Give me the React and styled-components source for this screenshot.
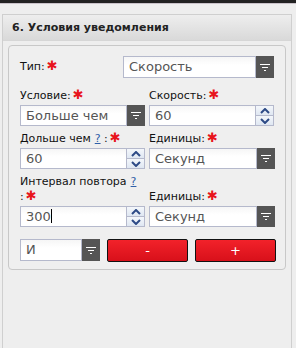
import styled, { createGlobalStyle } from "styled-components";

const GlobalStyle = createGlobalStyle`
  html, body {
    margin: 0;
    padding: 0;
    background: #eeeeee;
    font-family: "DejaVu Sans", Verdana, sans-serif;
  }
  #root {
    height: 348px;
    overflow: hidden;
  }
`;

const TopBar = styled.div`
  height: 3px;
  background: #222;
  border-bottom: 1px solid #c9c2c9;
`;

const Panel = styled.div`
  margin: 10px 4px 0 2px;
  height: 340px;
  border: 1px solid #cfcfcf;
  border-bottom: none;
  background: #eeeeee;
`;

const Header = styled.div`
  height: 25px;
  line-height: 25px;
  padding-left: 9px;
  font-size: 11px;
  font-weight: bold;
  color: #222;
  background: linear-gradient(#eeeeee, #d9d9d9);
  border-bottom: 1px solid #d6d6d6;
`;

const Box = styled.div`
  margin: 4px 5px 0 5px;
  padding: 10px 11px 7px 11px;
  border: 1px solid #c8c8c8;
  border-radius: 4px;
  background: #efefef;
  display: flex;
  flex-direction: column;
`;

const TypeRow = styled.div`
  display: flex;
  align-items: center;
  justify-content: space-between;
  height: 22px;
`;

const Grid = styled.div`
  display: grid;
  grid-template-columns: 125px 126px;
  column-gap: 4px;
  margin-top: ${(p) => p.$top}px;
`;

const Field = styled.div`
  display: flex;
  flex-direction: column;
  justify-content: flex-end;
`;

const Label = styled.div`
  font-size: 11px;
  line-height: 15px;
  color: #111;
  margin-bottom: 2px;
  white-space: nowrap;
`;

const Star = styled.span`
  color: #e8141c;
  font-size: 13px;
  line-height: 11px;
  margin-left: 2px;
`;

const Help = styled.a`
  color: #2f5fa8;
  text-decoration: underline;
  margin-left: 4px;
`;

const Control = styled.div`
  display: flex;
  width: ${(p) => p.$w}px;
  height: ${(p) => p.$h || 21}px;
`;

const Input = styled.div`
  flex: 1;
  border: 1px solid #b5b9cc;
  background: linear-gradient(#f6f6f6, #ffffff 40%);
  color: #555;
  font-size: 13px;
  line-height: ${(p) => p.$lh || 19}px;
  padding-left: 5px;
  box-sizing: border-box;
  overflow: hidden;
  white-space: nowrap;
`;

const Caret = styled.span`
  display: inline-block;
  width: 1px;
  height: 14px;
  background: #000;
  vertical-align: -2px;
`;

const DropButton = styled.div`
  width: 18px;
  background: #555;
  display: flex;
  align-items: center;
  justify-content: center;
`;

const Spin = styled.div`
  width: 18px;
  display: flex;
  flex-direction: column;
`;

const SpinButton = styled.div`
  flex: 1;
  border: 1px solid #b5b9cc;
  border-left: none;
  border-top: ${(p) => (p.$down ? "none" : "1px solid #b5b9cc")};
  background: linear-gradient(#f4f7fb, #dfe7f2);
  display: flex;
  align-items: center;
  justify-content: center;
`;

const Actions = styled.div`
  display: grid;
  grid-template-columns: 80px 81px 81px;
  column-gap: 7px;
  margin-top: 12px;
`;

const RedButton = styled.div`
  height: 23px;
  border: 1px solid #111;
  border-radius: 2px;
  box-sizing: border-box;
  background: linear-gradient(#f2222a, #d8101a);
  color: #fff;
  font-size: 13px;
  line-height: 21px;
  text-align: center;
`;

const FilterIcon = () => (
  <svg width="10" height="7" viewBox="0 0 10 7">
    <rect x="0" y="0" width="10" height="1" fill="#fff" />
    <rect x="2" y="3" width="6" height="1" fill="#fff" />
    <rect x="4" y="6" width="2" height="1" fill="#fff" />
  </svg>
);

const Chevron = ({ down }) => (
  <svg width="10" height="6" viewBox="0 0 10 6">
    <path
      d={down ? "M1 1 L5 5 L9 1" : "M1 5 L5 1 L9 5"}
      fill="none"
      stroke="#2d4a86"
      strokeWidth="2"
    />
  </svg>
);

const Select = ({ value, w, h }) => (
  <Control $w={w} $h={h}>
    <Input $lh={h ? h - 2 : 19}>{value}</Input>
    <DropButton>
      <FilterIcon />
    </DropButton>
  </Control>
);

const Spinner = ({ value, w, caret }) => (
  <Control $w={w} $h={21}>
    <Input>
      {value}
      {caret && <Caret />}
    </Input>
    <Spin>
      <SpinButton>
        <Chevron />
      </SpinButton>
      <SpinButton $down>
        <Chevron down />
      </SpinButton>
    </Spin>
  </Control>
);

export default function App() {
  return (
    <>
      <GlobalStyle />
      <TopBar />
      <Panel>
        <Header>6. Условия уведомления</Header>
        <Box>
          <TypeRow>
            <Label>
              Тип:<Star>✱</Star>
            </Label>
            <Select value="Скорость" w={151} h={22} />
          </TypeRow>
          <Grid $top={10}>
            <Field>
              <Label>
                Условие:<Star>✱</Star>
              </Label>
              <Select value="Больше чем" w={125} />
            </Field>
            <Field>
              <Label>
                Скорость:<Star>✱</Star>
              </Label>
              <Spinner value="60" w={125} />
            </Field>
          </Grid>
          <Grid $top={5}>
            <Field>
              <Label>
                Дольше чем<Help>?</Help> :<Star>✱</Star>
              </Label>
              <Spinner value="60" w={125} />
            </Field>
            <Field>
              <Label>
                Единицы:<Star>✱</Star>
              </Label>
              <Select value="Секунд" w={126} />
            </Field>
          </Grid>
          <Grid $top={5}>
            <Field>
              <Label>
                Интервал повтора<Help>?</Help>
                <br />:<Star>✱</Star>
              </Label>
              <Spinner value="300" w={125} caret />
            </Field>
            <Field>
              <Label>
                Единицы:<Star>✱</Star>
              </Label>
              <Select value="Секунд" w={126} />
            </Field>
          </Grid>
          <Actions>
            <Select value="И" w={80} h={22} />
            <RedButton>-</RedButton>
            <RedButton>+</RedButton>
          </Actions>
        </Box>
      </Panel>
    </>
  );
}
